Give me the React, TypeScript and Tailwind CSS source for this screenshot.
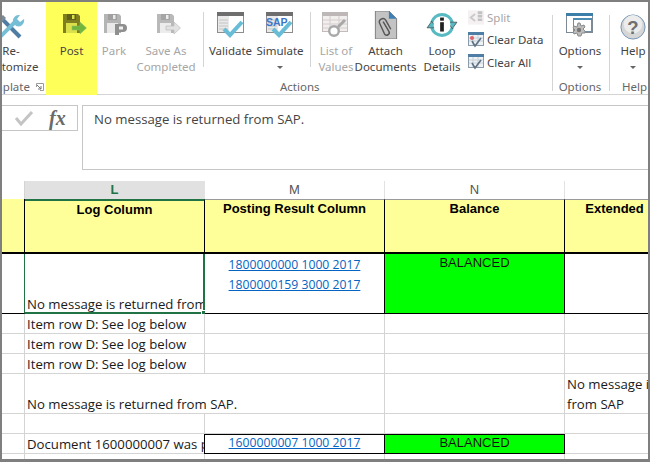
import type { ReactNode } from "react";

const uiFont = "font-['Noto_Sans',sans-serif]";
const cellFont = "font-['Open_Sans',sans-serif]";
const armFont = "font-['Liberation_Sans',Arial,sans-serif]";

function Floppy({ body, dark, light }: { body: string; dark: string; light: string }) {
  return (
    <>
      <path d="M0 0h15l2 2v17H0z" fill={body} />
      <rect x="4" y="0" width="9" height="6" fill={dark} />
      <rect x="9" y="1" width="2.5" height="4" fill={light} />
      <rect x="3" y="9" width="11" height="10" fill={light} />
    </>
  );
}

function PostIcon() {
  return (
    <svg className="ml-[6px]" width="24" height="22" viewBox="0 0 24 22">
      <Floppy body="#7f7f1f" dark="#5f6118" light="#dbe04a" />
      <path d="M9 12h8V8l6.5 6-6.5 6v-4H9z" fill="#71b53a" stroke="#8fc06a" strokeWidth="0.5" />
    </svg>
  );
}

function ParkIcon() {
  return (
    <svg className="ml-[4px]" width="24" height="22" viewBox="0 0 24 22">
      <Floppy body="#b4b4b4" dark="#a0a0a0" light="#e9e9e9" />
      <path d="M11 10h8a3.5 3.5 0 0 1 0 8h-4v3h-4z" fill="#8f8f8f" />
      <rect x="15" y="12.5" width="4" height="3" fill="#f0f0f0" />
    </svg>
  );
}

function SaveAsIcon() {
  return (
    <svg className="ml-[6px]" width="24" height="22" viewBox="0 0 24 22">
      <Floppy body="#b9b9b9" dark="#a5a5a5" light="#ececec" />
      <path d="M9 12h8V8l6.5 6-6.5 6v-4H9z" fill="#e2e2e2" stroke="#bdbdbd" strokeWidth="0.7" />
    </svg>
  );
}

function ToolsIcon() {
  return (
    <svg width="28" height="26" viewBox="0 0 28 26">
      <path d="M4 4l19 19" stroke="#4f7da3" strokeWidth="4" />
      <path d="M0 5l6-4 3 3-5 5z" fill="#7b8b98" />
      <path d="M3 23L18 8" stroke="#76bdd6" strokeWidth="4" />
      <path d="M16 8a6 6 0 0 1 7-7l-3 4 3 3 4-3a6 6 0 0 1-8 7z" fill="#76bdd6" />
    </svg>
  );
}

function WindowBase() {
  return (
    <>
      <rect x="0.5" y="0.5" width="26" height="20" fill="#fff" stroke="#8d8d8d" />
      <rect x="0" y="0" width="27" height="4" fill="#6e6e6e" />
      <rect x="1" y="4" width="11" height="16" fill="#e9e9e9" />
      <path d="M2 8h9M2 11h9M2 14h9M2 17h9" stroke="#c4c4c4" />
    </>
  );
}

function ValidateIcon() {
  return (
    <svg className="-mt-[2px]" width="28" height="27" viewBox="0 0 28 27">
      <WindowBase />
      <path d="M7 17l6 6L25 10" fill="none" stroke="#68bcd6" strokeWidth="4" />
    </svg>
  );
}

function SimulateIcon() {
  return (
    <svg className="-mt-[2px]" width="28" height="27" viewBox="0 0 28 27">
      <WindowBase />
      <path d="M7 17l6 6L25 10" fill="none" stroke="#68bcd6" strokeWidth="4" />
      <text x="0" y="14" fontSize="10.5" fontWeight="700" fill="#3e74c8" fontFamily="'Liberation Sans', sans-serif">SAP</text>
    </svg>
  );
}

function ValuesIcon() {
  return (
    <svg className="-mt-[2px]" width="28" height="26" viewBox="0 0 28 26">
      <rect x="0.5" y="0.5" width="25" height="19" fill="#f1eeee" stroke="#c4bcbc" />
      <rect x="0" y="0" width="26" height="4" fill="#bdb7b7" />
      <path d="M1 8h24M1 12h24M1 16h24M8 4v16M17 4v16" stroke="#d6cccc" />
      <circle cx="12" cy="19" r="4.8" fill="#fff" stroke="#a8a8a8" strokeWidth="2.4" />
      <path d="M16 15l7-7" stroke="#a8a8a8" strokeWidth="3" />
    </svg>
  );
}

function AttachIcon() {
  return (
    <svg className="-mt-[3px]" width="24" height="28" viewBox="0 0 24 29">
      <path d="M1 0h14l8 8v21H1z" fill="#c3c3c3" stroke="#7c7c7c" />
      <path d="M15 0l8 8h-8z" fill="#3f7fb5" />
      <path d="M9 11l6 10a2.6 2.6 0 0 1-4.6 2.6L5.5 13a3.6 3.6 0 0 1 6.2-3.6l5.3 9.5" fill="none" stroke="#555" strokeWidth="1.5" />
    </svg>
  );
}

function LoopIcon() {
  return (
    <svg className="-mt-[3px]" width="32" height="28" viewBox="0 0 32 30">
      <path d="M5 12A11.5 11.5 0 0 1 27 12" fill="none" stroke="#57b9c2" strokeWidth="3.4" />
      <path d="M27 18A11.5 11.5 0 0 1 5 18" fill="none" stroke="#57b9c2" strokeWidth="3.4" />
      <path d="M0 18l5-7 5 7z" fill="#57b9c2" stroke="#333" strokeWidth="0.7" />
      <path d="M22 12l5 7 5-7z" fill="#57b9c2" stroke="#333" strokeWidth="0.7" />
      <circle cx="16" cy="15" r="9" fill="#fff" />
      <rect x="14" y="12" width="4" height="10" fill="#222" />
      <rect x="14" y="7" width="4" height="3.4" fill="#222" />
    </svg>
  );
}

function OptionsIcon() {
  return (
    <svg className="-mt-[1px]" width="28" height="26" viewBox="0 0 28 26">
      <rect x="0.5" y="0.5" width="26" height="19" fill="#fff" stroke="#7d8a95" />
      <rect x="0" y="0" width="27" height="3" fill="#3d7ea8" />
      <rect x="7.5" y="5.5" width="18" height="13" fill="#fff" stroke="#6f8fa8" />
      <rect x="7" y="5" width="19" height="2" fill="#4d8bb1" />
      <path d="M12 10l2 0 1 3 3-1 1 2-2 2 2 2 0 2-3 0-1 3h-3l-1-3-3 1-1-2 2-2-2-2 1-2 3 1z" fill="#bdbdbd" stroke="#8a8a8a" />
      <circle cx="13" cy="17" r="2.2" fill="#777" />
    </svg>
  );
}

function HelpIcon() {
  return (
    <svg width="26" height="26" viewBox="0 0 28 28">
      <circle cx="14" cy="14" r="13" fill="#d6d6d6" stroke="#6d8fb2" />
      <circle cx="14" cy="11" r="10" fill="#ececec" />
      <text x="14" y="21" textAnchor="middle" fontSize="20" fontWeight="700" fill="#6f6f6f" fontFamily="'Liberation Sans', sans-serif">?</text>
    </svg>
  );
}

function SplitIcon() {
  return (
    <svg width="16" height="15" viewBox="0 0 18 16">
      <rect width="18" height="16" fill="#f5f0f2" />
      <path d="M8 4L3 8l5 4" fill="none" stroke="#c9c9c9" strokeWidth="2" />
      <path d="M11 1h5v3h-5zM11 5h5v3h-5zM11 9h5v3h-5z" fill="#c2c2c2" />
    </svg>
  );
}

function ClearIcon({ pin = false }: { pin?: boolean }) {
  return (
    <svg width="16" height="16" viewBox="0 0 16 16">
      <rect x="0.5" y="0.5" width="15" height="13" fill="#eef2f5" stroke="#8b9dab" />
      <rect x="0" y="0" width="16" height="3" fill="#4e7ea6" />
      <path d="M1 6h14M1 9h14M5 3v10M10 3v10" stroke="#c5d0d8" />
      <path d="M4 9l3 5 6-8" fill="none" stroke="#5f7182" strokeWidth="1.6" />
      {pin && <circle cx="4" cy="6" r="2" fill="#e0636a" />}
    </svg>
  );
}

function Caret() {
  return <span className="block w-0 h-0 border-x-[3px] border-x-transparent border-t-[3px] border-t-[#666]" />;
}

function RibbonButton({
  width,
  icon,
  lines,
  disabled = false,
  menu = false,
  className = "",
}: {
  width: string;
  icon: ReactNode;
  lines: string[];
  disabled?: boolean;
  menu?: boolean;
  className?: string;
}) {
  return (
    <div className={`flex flex-col items-center shrink-0 ${width} ${className}`}>
      <div className="h-[41px] pt-[12px] flex justify-center">{icon}</div>
      <div className={`text-[11.5px] leading-[16px] text-center whitespace-nowrap ${disabled ? "text-[#a6a6a6]" : "text-[#444]"}`}>
        {lines.map((l) => (
          <div key={l}>{l}</div>
        ))}
        {menu && (
          <div className="h-[16px] flex items-center justify-center">
            <Caret />
          </div>
        )}
      </div>
    </div>
  );
}

function SmallButton({ icon, label, disabled = false }: { icon: ReactNode; label: string; disabled?: boolean }) {
  return (
    <div className="flex items-center gap-[3px] h-[22.5px] whitespace-nowrap">
      <span className="w-[16px] flex justify-center">{icon}</span>
      <span className={`text-[11.5px] ${disabled ? "text-[#a6a6a6]" : "text-[#444]"}`}>{label}</span>
    </div>
  );
}

function Sep() {
  return <div className="w-px h-[55px] mt-[10px] bg-[#d4d4d4] shrink-0" />;
}

function Group({
  label,
  width,
  labelClass = "text-center",
  children,
  border = true,
}: {
  label: ReactNode;
  width: string;
  labelClass?: string;
  children: ReactNode;
  border?: boolean;
}) {
  return (
    <div className={`relative flex flex-col shrink-0 ${width}`}>
      <div className="flex h-[79px]">{children}</div>
      <div className={`h-[14px] text-[11.5px] leading-[14px] text-[#666] ${labelClass}`}>{label}</div>
      {border && <div className="absolute right-0 top-[13px] h-[76px] w-px bg-[#d4d4d4]" />}
    </div>
  );
}

function Ribbon() {
  return (
    <div className={`flex h-[93px] border-b border-[#d4d4d4] bg-white ${uiFont}`}>
      <div className="w-[44px] shrink-0 overflow-hidden flex flex-col">
        <div className="h-[79px] -ml-[19px]">
          <RibbonButton width="w-[56px]" icon={<ToolsIcon />} lines={["Re-", "customize"]} />
        </div>
        <div className="relative h-[14px] text-[11.5px] leading-[14px] text-[#666]">
          <span className="-ml-[22px]">Template</span>
          <svg className="absolute left-[34px] top-[3px]" width="8" height="8" viewBox="0 0 8 8">
            <path d="M0.5 4V0.5H7.5V7.5H4" fill="none" stroke="#9a9a9a" />
            <path d="M1 2l4 4M5 3v3H2" fill="none" stroke="#777" />
          </svg>
        </div>
      </div>
      <div className="w-[51px] shrink-0 h-[93px] bg-[#ffff59]">
        <RibbonButton width="w-[51px]" icon={<PostIcon />} lines={["Post"]} />
      </div>
      <RibbonButton width="w-[34px]" icon={<ParkIcon />} lines={["Park"]} disabled />
      <RibbonButton width="w-[70px]" icon={<SaveAsIcon />} lines={["Save As", "Completed"]} disabled />
      <div className="w-[2px] shrink-0" />
      <Group label="Actions" width="w-[350px]" labelClass="pl-[77px]">
        <Sep />
        <RibbonButton width="w-[51px]" className="ml-px" icon={<ValidateIcon />} lines={["Validate"]} />
        <RibbonButton width="w-[48px]" icon={<SimulateIcon />} lines={["Simulate"]} menu />
        <div className="w-[6px]" />
        <Sep />
        <RibbonButton width="w-[50px]" icon={<ValuesIcon />} lines={["List of", "Values"]} disabled />
        <RibbonButton width="w-[49px]" icon={<AttachIcon />} lines={["Attach", "Documents"]} />
        <RibbonButton width="w-[52px]" className="ml-[6px]" icon={<LoopIcon />} lines={["Loop", "Details"]} />
        <div className="pt-[4px]">
          <SmallButton icon={<SplitIcon />} label="Split" disabled />
          <SmallButton icon={<ClearIcon pin />} label="Clear Data" />
          <SmallButton icon={<ClearIcon />} label="Clear All" />
        </div>
      </Group>
      <Group label="Options" width="w-[57px]" labelClass="text-center pr-[3px]">
        <RibbonButton width="w-[54px]" icon={<OptionsIcon />} lines={["Options"]} menu />
      </Group>
      <Group label="Help" width="w-[38px]" labelClass="pl-[12px]" border={false}>
        <RibbonButton width="w-[38px]" className="ml-[4px]" icon={<HelpIcon />} lines={["Help"]} menu />
      </Group>
    </div>
  );
}

function FormulaBar() {
  return (
    <div className="flex h-[86px] pt-[10px] bg-white">
      <div className="w-[76px] h-[26px] shrink-0 flex items-center border border-l-0 border-[#c6c6c6]">
        <svg className="ml-[12px]" width="20" height="16" viewBox="0 0 20 16">
          <path d="M2 8l5 6L18 2" fill="none" stroke="#c4c4c4" strokeWidth="3" />
        </svg>
        <span className="ml-[15px] font-['Liberation_Serif',serif] italic font-bold text-[20px] leading-none text-[#6a6a6a]">fx</span>
      </div>
      <div className={`ml-[4px] flex-1 h-[65px] border border-r-0 border-[#c6c6c6] pl-[11px] pt-[3px] text-[13.2px] leading-[20px] text-[#444] ${cellFont}`}>
        No message is returned from SAP.
      </div>
    </div>
  );
}

const gridLine = "border-r border-b border-[#d4d4d4]";

function Cell({ className = "", children }: { className?: string; children?: ReactNode }) {
  return <div className={`min-w-0 relative ${className}`}>{children}</div>;
}

function TextLine({ children }: { children: ReactNode }) {
  return (
    <div className={`absolute left-[2px] -bottom-px leading-[20px] text-[13.2px] whitespace-nowrap text-[#1a1a1a] ${cellFont}`}>{children}</div>
  );
}

function Link({ children }: { children: ReactNode }) {
  return <div className="underline text-[#0563c1] text-[12.2px] leading-[20px] text-center">{children}</div>;
}

function Sheet() {
  const header = `flex justify-center pt-[1px] text-[13px] leading-[16px] font-bold text-black bg-[#ffff99] border-r border-b-2 border-black ${armFont}`;
  const headerCol = "h-[18px] flex items-center justify-center text-[13px] border-r border-[#e2e2e2] text-[#555]";

  return (
    <div className="grid grid-cols-[23px_180px_180px_180px_1fr] overflow-hidden">
      <div className="h-[18px] bg-white border-r border-[#d4d4d4]" />
      <div className={`${headerCol} bg-[#e1e1e1] font-bold text-[#217346] ${armFont}`}>L</div>
      <div className={`${headerCol} ${armFont}`}>M</div>
      <div className={`${headerCol} ${armFont}`}>N</div>
      <div className={`${headerCol} border-r-0`} />

      {/* header row */}
      <div className="h-[55px] bg-[#ffff99] border-r border-b-2 border-black" />
      <div className={`${header} border-t-2 border-t-[#217346]`}>Log Column</div>
      <div className={`${header} border-t border-t-[#9a9a9a]`}>Posting Result Column</div>
      <div className={`${header} border-t border-t-[#9a9a9a]`}>Balance</div>
      <div className={`${header} border-t border-t-[#9a9a9a] border-r-0 whitespace-nowrap`}>
        <span className="ml-[16px]">Extended</span>
      </div>

      {/* posting row */}
      <Cell className="h-[60px] border-r border-b border-b-black border-r-[#217346]" />
      <Cell className="h-[60px] border-b-2 border-r-2 border-t-0 border-[#217346]">
        <div className="absolute inset-0 overflow-hidden">
          <div className={`absolute left-[2px] -bottom-[2px] leading-[20px] text-[13.2px] whitespace-nowrap text-[#1a1a1a] ${cellFont}`}>
            No message is returned from SAP.
          </div>
        </div>
        <div className="absolute -right-[3px] -bottom-[3px] w-[5px] h-[5px] bg-[#217346] border border-white" />
      </Cell>
      <Cell className={`h-[60px] border-r border-b border-black pt-[1px] ${cellFont}`}>
        <Link>1800000000 1000 2017</Link>
        <Link>1800000159 3000 2017</Link>
      </Cell>
      <Cell className={`h-[60px] bg-[#00ff00] border-r border-b border-black text-center text-[13px] leading-[18px] text-[#111] ${armFont}`}>BALANCED</Cell>
      <Cell className="h-[60px] border-b border-black" />

      {/* item rows */}
      {[0, 1, 2].map((i) => (
        <div key={i} className="contents">
          <Cell className={`h-[20px] ${gridLine}`} />
          <Cell className={`h-[20px] ${gridLine}`}>
            <TextLine>Item row D: See log below</TextLine>
          </Cell>
          <Cell className={`h-[20px] ${gridLine}`} />
          <Cell className={`h-[20px] ${gridLine}`} />
          <Cell className="h-[20px] border-b border-[#d4d4d4]" />
        </div>
      ))}

      {/* message row */}
      <Cell className={`h-[40px] ${gridLine}`} />
      <Cell className="h-[40px] border-b border-[#d4d4d4]">
        <TextLine>No message is returned from SAP.</TextLine>
      </Cell>
      <Cell className={`h-[40px] ${gridLine}`} />
      <Cell className={`h-[40px] ${gridLine}`} />
      <Cell className={`h-[40px] border-b border-[#d4d4d4] pl-[2px] text-[13.2px] leading-[20px] text-[#1a1a1a] whitespace-nowrap overflow-hidden ${cellFont}`}>
        <div>No message is returned</div>
        <div>from SAP</div>
      </Cell>

      {/* blank row */}
      <Cell className={`h-[20px] ${gridLine}`} />
      <Cell className={`h-[20px] ${gridLine}`} />
      <Cell className={`h-[20px] ${gridLine}`} />
      <Cell className={`h-[20px] ${gridLine}`} />
      <Cell className="h-[20px] border-b border-[#d4d4d4]" />

      {/* document row */}
      <Cell className={`h-[20px] ${gridLine}`} />
      <Cell className="h-[20px] border-b border-[#d4d4d4]">
        <div className="absolute inset-0 overflow-hidden">
          <TextLine>Document 1600000007 was posted</TextLine>
        </div>
      </Cell>
      <Cell className={`h-[20px] border border-black -ml-px ${cellFont}`}>
        <div className="underline text-[#0563c1] text-[12.2px] leading-[16px] text-center">1600000007 1000 2017</div>
      </Cell>
      <Cell className={`h-[20px] bg-[#00ff00] border-r border-y border-black text-center text-[13px] leading-[15px] text-[#111] ${armFont}`}>BALANCED</Cell>
      <Cell className="h-[20px] border-b border-[#d4d4d4]" />

      <Cell className={`h-[20px] ${gridLine}`} />
      <Cell className={`h-[20px] ${gridLine}`} />
      <Cell className={`h-[20px] ${gridLine}`} />
      <Cell className={`h-[20px] ${gridLine}`} />
      <Cell className="h-[20px]" />
    </div>
  );
}

export default function App() {
  return (
    <div className="relative w-[650px] h-[462px] overflow-hidden bg-white border-t-2 border-x-2 border-b-[3px] border-[#7f7f7f]">
      <Ribbon />
      <FormulaBar />
      <Sheet />
    </div>
  );
}
